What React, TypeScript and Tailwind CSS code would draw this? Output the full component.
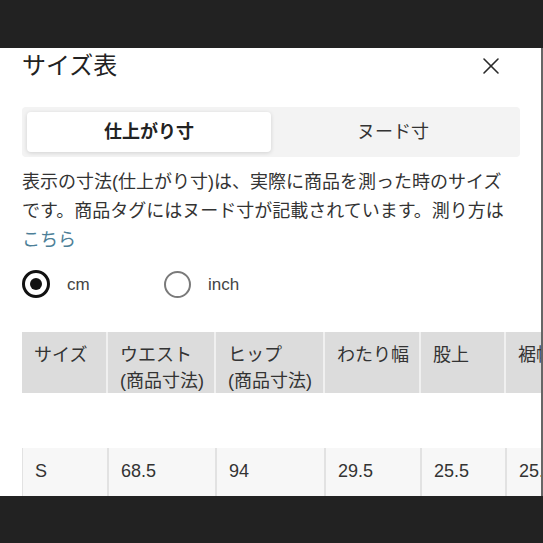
const headers = [
  ['サイズ'],
  ['ウエスト', '(商品寸法)'],
  ['ヒップ', '(商品寸法)'],
  ['わたり幅'],
  ['股上'],
  ['裾幅'],
]

const rowS = ['S', '68.5', '94', '29.5', '25.5', '25.5']

const cols = 'grid grid-cols-[84px_106px_107px_94px_83px_100px] gap-x-[2px] w-max'

function CloseIcon() {
  return (
    <svg width="18" height="18" viewBox="0 0 18 18" fill="none" stroke="#2a2a2a" strokeWidth="1.6" strokeLinecap="round">
      <line x1="2" y1="2" x2="16" y2="16" />
      <line x1="16" y1="2" x2="2" y2="16" />
    </svg>
  )
}

function Radio({ checked, label }: { checked: boolean; label: string }) {
  return (
    <div className="flex items-center w-[142px]">
      {checked ? (
        <span className="w-[28px] h-[28px] rounded-full border-[3px] border-[#111] flex items-center justify-center">
          <span className="w-[12px] h-[12px] rounded-full bg-[#111]" />
        </span>
      ) : (
        <span className="w-[27px] h-[27px] rounded-full border-[2.5px] border-[#7a7a7a]" />
      )}
      <span className="ml-[17px] text-[17px] text-[#444] leading-none">{label}</span>
    </div>
  )
}

export default function App() {
  return (
    <div className="w-[543px] h-[543px] bg-[#222] flex flex-col overflow-hidden font-['Liberation_Sans','Noto_Sans_CJK_JP',sans-serif]">
      <div className="h-[48px] shrink-0" />
      <div className="h-[448px] shrink-0 bg-white border-r-2 border-[#666] overflow-hidden pl-[22px]">
        <div className="flex items-center justify-between pt-[2px] pr-[41px]">
          <h1 className="text-[24px] leading-[32px] text-[#222]">サイズ表</h1>
          <CloseIcon />
        </div>

        <div className="mt-[25px] w-[498px] h-[50px] bg-[#f3f3f3] rounded-[4px] p-[5px] grid grid-cols-2">
          <div className="bg-white rounded-[4px] shadow-[0_1px_4px_rgba(0,0,0,0.14)] flex items-center justify-center text-[18px] font-bold text-[#222]">
            仕上がり寸
          </div>
          <div className="flex items-center justify-center text-[18px] text-[#333]">ヌード寸</div>
        </div>

        <p className="mt-[11px] text-[18px] leading-[29px] text-[#333] whitespace-nowrap">
          表示の寸法(仕上がり寸)は、実際に商品を測った時のサイズ
          <br />
          です。商品タグにはヌード寸が記載されています。測り方は
          <br />
          <a className="text-[#4d7f98]">こちら</a>
        </p>

        <div className="mt-[15px] flex items-center h-[28px]">
          <Radio checked label="cm" />
          <Radio checked={false} label="inch" />
        </div>

        <div className="mt-[34px] text-[18px] leading-[26px] text-[#333]">
          <div className={`${cols} bg-[#f0f0f0]`}>
            {headers.map((h, i) => (
              <div key={i} className="bg-[#dcdcdc] h-[61px] pt-[10px] pl-3">
                {h.map((line) => (
                  <div key={line}>{line}</div>
                ))}
              </div>
            ))}
          </div>
          <div className="h-[55px]" />
          <div className={`${cols} bg-[#e2e2e2] pl-[1px]`}>
            {rowS.map((v, i) => (
              <div key={i} className="bg-[#f7f7f7] h-[60px] pt-[10px] pl-3">
                {v}
              </div>
            ))}
          </div>
        </div>
      </div>
      <div className="flex-1" />
    </div>
  )
}
